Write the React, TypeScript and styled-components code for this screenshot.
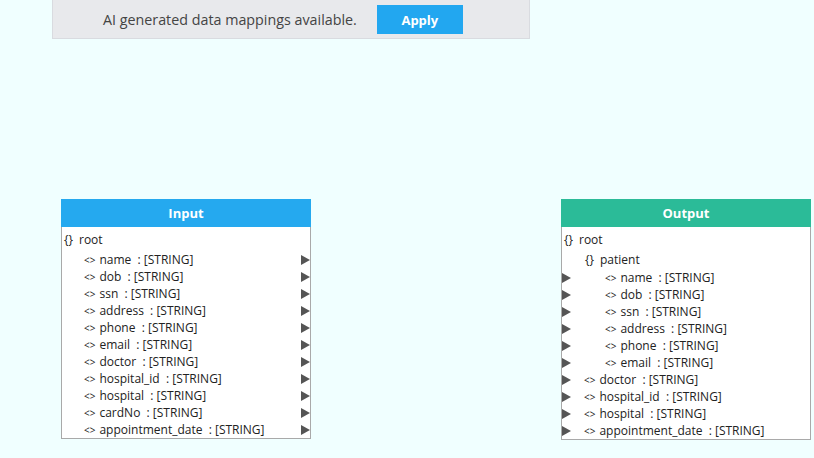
import React, { ReactElement } from "react";
import styled, { createGlobalStyle } from "styled-components";

const GlobalStyle = createGlobalStyle`
  html, body {
    margin: 0;
    padding: 0;
    background: #f0ffff;
  }
  body {
    font-family: "Open Sans", "Noto Sans", sans-serif;
    color: #222;
  }
`;

const Canvas = styled.div`
  position: relative;
  width: 814px;
  height: 458px;
  overflow: hidden;
`;

const Banner = styled.div`
  position: absolute;
  left: 52px;
  top: -1px;
  width: 478px;
  height: 40px;
  box-sizing: border-box;
  padding-left: 50px;
  background: #e8e9ec;
  border: 1px solid #d9dbe0;
  display: flex;
  align-items: center;
  gap: 20px;
  font-size: 14.3px;
  color: #444;
`;

const ApplyButton = styled.button`
  width: 86px;
  height: 29px;
  border: none;
  background: #22a7f0;
  color: #fff;
  font-family: inherit;
  font-weight: 700;
  font-size: 13px;
  cursor: pointer;
  margin-top: 1px;
`;

const Node = styled.div<{ $left: number }>`
  position: absolute;
  left: ${(p) => p.$left}px;
  top: 199px;
  width: 248px;
  background: #fff;
  border: 1px solid #a9a9a9;
  border-top: none;
`;

const NodeHeader = styled.div<{ $color: string }>`
  height: 28px;
  margin: 0 -1px;
  background: ${(p) => p.$color};
  color: #fff;
  font-weight: 700;
  font-size: 13px;
  display: flex;
  align-items: center;
  justify-content: center;
`;

const NodeBody = styled.div`
  padding: 2px 0 0;
`;

const Row = styled.div<{ $indent: number; $tall?: boolean }>`
  position: relative;
  height: ${(p) => (p.$tall ? 18 : 17)}px;
  line-height: ${(p) => (p.$tall ? 18 : 17)}px;
  font-size: 12px;
  padding-left: ${(p) => p.$indent}px;
  white-space: nowrap;
`;

const RootRow = styled(Row)`
  height: 21px;
  line-height: 21px;
  margin-bottom: 1px;
`;

const Brace = styled.span`
  font-size: 12px;
  margin-right: 6px;
`;

const Tag = styled.span`
  font-size: 10px;
  margin-right: 4px;
`;

const Port = styled.span<{ $side: "left" | "right" }>`
  position: absolute;
  top: 4px;
  ${(p) => (p.$side === "right" ? "right: 0;" : "left: 0;")}
  width: 0;
  height: 0;
  border-top: 5px solid transparent;
  border-bottom: 5px solid transparent;
  border-left: 9px solid #555;
`;

interface IField {
  name: string;
  indent: number;
  object?: boolean;
}

const inputFields: IField[] = [
  "name",
  "dob",
  "ssn",
  "address",
  "phone",
  "email",
  "doctor",
  "hospital_id",
  "hospital",
  "cardNo",
  "appointment_date",
].map((n) => ({ name: n, indent: 22 }));

const outputFields: IField[] = [
  { name: "patient", indent: 23, object: true },
  ...["name", "dob", "ssn", "address", "phone", "email"].map((n) => ({
    name: n,
    indent: 43,
  })),
  ...["doctor", "hospital_id", "hospital", "appointment_date"].map((n) => ({
    name: n,
    indent: 22,
  })),
];

const renderField = (f: IField, side: "left" | "right", key: number) => {
  if (f.object) {
    return (
      <Row key={key} $indent={f.indent} $tall>
        <Brace>{"{}"}</Brace>
        {f.name}
      </Row>
    );
  }
  return (
    <Row key={key} $indent={f.indent}>
      <Tag>{"<>"}</Tag>
      {f.name}&nbsp; : [STRING]
      <Port $side={side} />
    </Row>
  );
};

const App = (): ReactElement => {
  return (
    <>
      <GlobalStyle />
      <Canvas>
        <Banner>
          <span>AI generated data mappings available.</span>
          <ApplyButton>Apply</ApplyButton>
        </Banner>
        <Node $left={61}>
          <NodeHeader $color="#25a9ef">Input</NodeHeader>
          <NodeBody>
            <RootRow $indent={2}>
              <Brace>{"{}"}</Brace>root
            </RootRow>
            {inputFields.map((f, i) => renderField(f, "right", i))}
          </NodeBody>
        </Node>
        <Node $left={561}>
          <NodeHeader $color="#2bbb98">Output</NodeHeader>
          <NodeBody>
            <RootRow $indent={2}>
              <Brace>{"{}"}</Brace>root
            </RootRow>
            {outputFields.map((f, i) => renderField(f, "left", i))}
          </NodeBody>
        </Node>
      </Canvas>
    </>
  );
};

export default App;
